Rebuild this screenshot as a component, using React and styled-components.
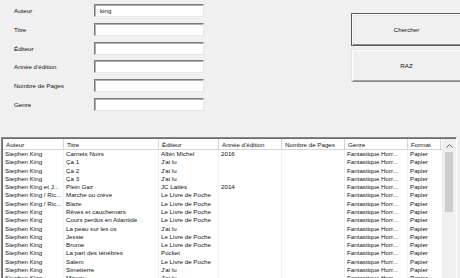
import { Fragment } from 'react'
import styled, { createGlobalStyle } from 'styled-components'

const GlobalStyle = createGlobalStyle`
  html, body {
    margin: 0;
    padding: 0;
    background: #f0f0f0;
  }
  body {
    font-family: 'Liberation Sans', Arial, sans-serif;
    color: #111;
  }
`

const Window = styled.div`
  width: 460px;
  height: 278px;
  overflow: hidden;
  background: #f0f0f0;
  font-size: 6.2px;
`

const Top = styled.div`
  display: flex;
  height: 137px;
`

const Form = styled.div`
  display: grid;
  grid-template-columns: 80px 110px;
  grid-auto-rows: 13px;
  row-gap: 5.75px;
  padding: 4px 0 0 14px;
  align-content: start;
`

const Label = styled.label`
  display: flex;
  align-items: center;
`

const Input = styled.input`
  box-sizing: border-box;
  width: 110px;
  height: 13px;
  margin: 0;
  padding: 0 5px;
  font: 6.2px 'Liberation Sans', Arial, sans-serif;
  color: #111;
  background: #fff;
  border: 1px solid;
  border-color: #7a7a7a #e6e6e6 #e6e6e6 #7a7a7a;
  box-shadow: inset 1px 1px 0 #b0b0b0;
  outline: none;
`

const Buttons = styled.div`
  display: flex;
  flex-direction: column;
  gap: 3px;
  margin-left: 147px;
  padding-top: 13px;
`

const Button = styled.button`
  box-sizing: border-box;
  width: 111px;
  height: 33px;
  margin: 0;
  padding: 0;
  font: 6.2px 'Liberation Sans', Arial, sans-serif;
  color: #111;
  background: #f0f0f0;
  border: 1px solid;
  border-color: ${p => (p.$default ? '#5a5a5a' : '#e3e3e3 #8a8a8a #8a8a8a #e3e3e3')};
  box-shadow: ${p =>
    p.$default
      ? 'inset 1px 1px 0 #ffffff, inset -1px -1px 0 #8a8a8a, inset 2px 2px 0 #e3e3e3'
      : 'inset 1px 1px 0 #ffffff, inset -1px -1px 0 #a0a0a0'};
`

const ListView = styled.div`
  box-sizing: border-box;
  margin-left: 1px;
  width: 456px;
  height: 150px;
  background: #fff;
  border: 1px solid;
  border-color: #8a8a8a #ffffff #ffffff #8a8a8a;
  box-shadow: inset 1px 1px 0 #6a6a6a;
  display: flex;
  padding: 1px 0 0 1px;
`

const Grid = styled.div`
  flex: 1;
  display: flex;
  flex-direction: column;
`

const cols = '61px 95px 60px 63px 63px 63px 33px'

const HeaderRow = styled.div`
  display: grid;
  grid-template-columns: ${cols};
  height: 10px;
  border-bottom: 1px solid #d5d5d5;
  background: #fff;
`

const HeaderCell = styled.div`
  display: flex;
  align-items: center;
  padding-left: 3px;
  border-right: 1px solid #d5d5d5;
  white-space: nowrap;
  overflow: hidden;
`

const Row = styled.div`
  display: grid;
  grid-template-columns: ${cols};
  height: 8.27px;
`

const Cell = styled.div`
  display: flex;
  align-items: center;
  padding-left: 2px;
  border-right: 1px solid ${p => (p.$last ? 'transparent' : '#f0f0f0')};
  white-space: nowrap;
  overflow: hidden;
  line-height: 8px;
`

const Scrollbar = styled.div`
  width: 14px;
  background: #f0f0f0;
  display: flex;
  flex-direction: column;
  align-items: center;
`

const Arrow = styled.div`
  height: 13px;
  display: flex;
  align-items: center;
  justify-content: center;
`

const Thumb = styled.div`
  width: 8px;
  height: 60px;
  background: #cdcdcd;
`

const fields = ['Auteur', 'Titre', 'Éditeur', "Année d'édition", 'Nombre de Pages', 'Genre']
const headers = ['Auteur', 'Titre', 'Éditeur', "Année d'édition", 'Nombre de Pages', 'Genre', 'Format']

const books = [
  ['Stephen King', 'Carnets Noirs', 'Albin Michel', '2016'],
  ['Stephen King', 'Ça 1', "J'ai lu", ''],
  ['Stephen King', 'Ça 2', "J'ai lu", ''],
  ['Stephen King', 'Ça 3', "J'ai lu", ''],
  ['Stephen King et J...', 'Plein Gaz', 'JC Lattès', '2014'],
  ['Stephen King / Ric...', 'Marche ou crève', 'Le Livre de Poche', ''],
  ['Stephen King / Ric...', 'Blaze', 'Le Livre de Poche', ''],
  ['Stephen King', 'Rêves et cauchemars', 'Le Livre de Poche', ''],
  ['Stephen King', 'Cours perdus en Atlantide', 'Le Livre de Poche', ''],
  ['Stephen King', 'La peau sur les os', "J'ai lu", ''],
  ['Stephen King', 'Jessie', 'Le Livre de Poche', ''],
  ['Stephen King', 'Brume', 'Le Livre de Poche', ''],
  ['Stephen King', 'La part des ténèbres', 'Pocket', ''],
  ['Stephen King', 'Salem', 'Le Livre de Poche', ''],
  ['Stephen King', 'Simetierre', "J'ai lu", ''],
  ['Stephen King', 'Misery', "J'ai lu", ''],
]

export default function App() {
  return (
    <Window>
      <GlobalStyle />
      <Top>
        <Form>
          {fields.map(f => (
            <Fragment key={f}>
              <Label>{f}</Label>
              <Input defaultValue={f === 'Auteur' ? 'king' : ''} />
            </Fragment>
          ))}
        </Form>
        <Buttons>
          <Button $default>Chercher</Button>
          <Button>RAZ</Button>
        </Buttons>
      </Top>
      <ListView>
        <Grid>
          <HeaderRow>
            {headers.map(h => (
              <HeaderCell key={h}>{h}</HeaderCell>
            ))}
          </HeaderRow>
          {books.map((b, i) => (
            <Row key={i}>
              <Cell>{b[0]}</Cell>
              <Cell>{b[1]}</Cell>
              <Cell>{b[2]}</Cell>
              <Cell>{b[3]}</Cell>
              <Cell></Cell>
              <Cell>Fantastique Horr...</Cell>
              <Cell $last>Papier</Cell>
            </Row>
          ))}
        </Grid>
        <Scrollbar>
          <Arrow>
            <svg width="7" height="4" viewBox="0 0 7 4">
              <path d="M0.5 3.5 L3.5 0.5 L6.5 3.5" fill="none" stroke="#606060" strokeWidth="1" />
            </svg>
          </Arrow>
          <Thumb />
        </Scrollbar>
      </ListView>
    </Window>
  )
}
